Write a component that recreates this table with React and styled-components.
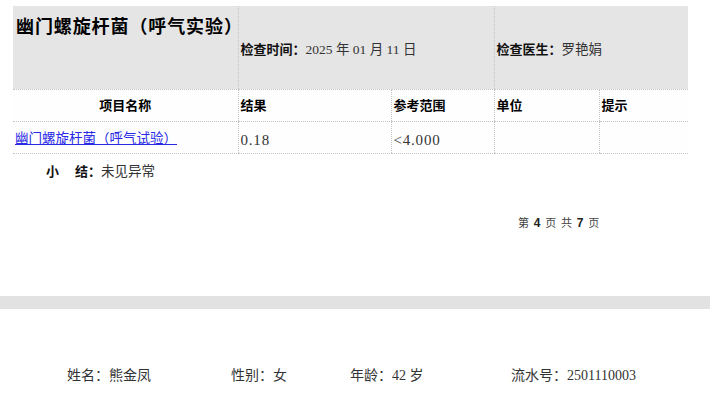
import React from "react";
import styled, { createGlobalStyle } from "styled-components";

const GlobalStyle = createGlobalStyle`
  body {
    margin: 0;
    background: #ffffff;
    font-family: "Liberation Serif", "Noto Sans CJK SC", serif;
    color: #333;
    text-spacing-trim: space-all;
  }
`;

const columns = [225, 153, 103, 105, 89];

const App = () => {
  return (
    <Page>
      <GlobalStyle />
      <Report>
        <Table>
          <colgroup>
            {columns.map((w, i) => (
              <col key={i} style={{ width: w }} />
            ))}
          </colgroup>
          <tbody>
            <HeadRow>
              <TitleCell>幽门螺旋杆菌（呼气实验）</TitleCell>
              <InfoCell colSpan={2}>
                <Label>检查时间：</Label>
                <Value>2025 年 01 月 11 日</Value>
              </InfoCell>
              <InfoCell colSpan={2}>
                <Label>检查医生：</Label>
                <Value>罗艳娟</Value>
              </InfoCell>
            </HeadRow>
            <Row>
              <HeadCell center>项目名称</HeadCell>
              <HeadCell>结果</HeadCell>
              <HeadCell>参考范围</HeadCell>
              <HeadCell>单位</HeadCell>
              <HeadCell>提示</HeadCell>
            </Row>
            <Row>
              <Cell>
                <ItemLink href="#">幽门螺旋杆菌（呼气试验）</ItemLink>
              </Cell>
              <NumCell>0.18</NumCell>
              <NumCell>&lt;4.000</NumCell>
              <Cell />
              <Cell />
            </Row>
          </tbody>
        </Table>
        <Summary>
          <Label>
            小<Gap />结：
          </Label>
          <Value>未见异常</Value>
        </Summary>
        <PageNo>
          第 <b>4</b> 页 共 <b>7</b> 页
        </PageNo>
      </Report>
      <Band />
      <Footer>
        <FooterItem width={164}>姓名：熊金凤</FooterItem>
        <FooterItem width={119}>性别：女</FooterItem>
        <FooterItem width={161}>年龄：42 岁</FooterItem>
        <FooterItem>流水号：2501110003</FooterItem>
      </Footer>
    </Page>
  );
};

const Page = styled.div`
  width: 710px;
  height: 397px;
  overflow: hidden;
`;

const Report = styled.section`
  padding: 6px 22px 0 13px;
`;

const Table = styled.table`
  width: 675px;
  table-layout: fixed;
  border-collapse: collapse;
  border-spacing: 0;
`;

const Row = styled.tr`
  height: 32px;
  background: #fefefe;
`;

const HeadRow = styled.tr`
  height: 83px;
  background: #e5e5e5;
`;

const Cell = styled.td`
  padding: 0 2px;
  border-bottom: 1px dotted #c4c4c4;
  border-left: 1px dotted #c4c4c4;
  font-size: 13px;
  vertical-align: middle;

  &:first-child {
    border-left: none;
  }
`;

const TitleCell = styled(Cell)`
  vertical-align: top;
  padding: 8px 2px 0 3px;
  font-family: "Noto Sans CJK SC", sans-serif;
  font-weight: bold;
  font-size: 18px;
  line-height: 22px;
  letter-spacing: 0.9px;
  color: #000;
  white-space: nowrap;
`;

const InfoCell = styled(Cell)`
  padding-top: 1px;
  white-space: nowrap;
`;

const HeadCell = styled(Cell)`
  text-align: ${(p) => (p.center ? "center" : "left")};
  font-family: "Noto Sans CJK SC", sans-serif;
  font-weight: bold;
  color: #000;
  padding-bottom: 1px;
`;

const NumCell = styled(Cell)`
  font-size: 15px;
  letter-spacing: 0.8px;
  padding-top: 7px;
  color: #333;
`;

const ItemLink = styled.a`
  font-family: "Noto Sans CJK SC", sans-serif;
  font-size: 13.5px;
  color: #2a2ae6;
  text-decoration: underline;
  white-space: nowrap;
`;

const Label = styled.span`
  font-family: "Noto Sans CJK SC", sans-serif;
  font-weight: bold;
  font-size: 13px;
  color: #111;
`;

const Gap = styled.span`
  display: inline-block;
  width: 16px;
`;

const Value = styled.span`
  font-size: 13.5px;
  color: #333;
`;

const Summary = styled.div`
  margin-top: 8px;
  padding-left: 33px;
  line-height: 18px;
`;

const PageNo = styled.div`
  margin-top: 33px;
  padding-left: 505px;
  line-height: 18px;
  font-size: 11px;
  color: #444;
  word-spacing: 2px;

  b {
    font-family: "Liberation Sans", sans-serif;
    font-size: 12px;
    color: #222;
  }
`;

const Band = styled.div`
  margin-top: 64px;
  height: 13px;
  background: #e2e2e2;
`;

const Footer = styled.div`
  display: flex;
  margin-top: 57px;
  padding-left: 67px;
  line-height: 20px;
  font-size: 14px;
  color: #333;
`;

const FooterItem = styled.div`
  flex: 0 0 ${(p) => (p.width ? `${p.width}px` : "auto")};
  white-space: nowrap;
`;

export default App;
